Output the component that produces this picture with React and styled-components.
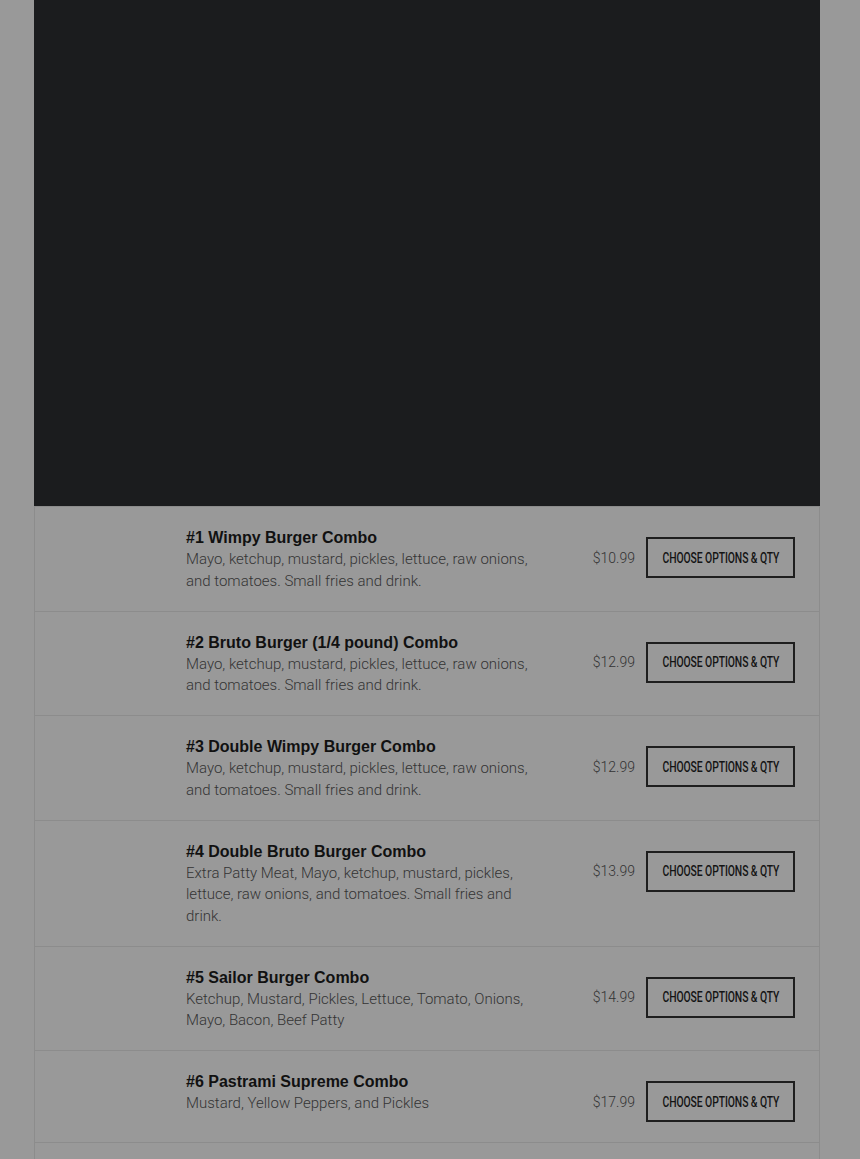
import React from "react";
import styled, { createGlobalStyle } from "styled-components";

const Global = createGlobalStyle`
  html, body { margin: 0; padding: 0; background: #999999; }
  body { font-family: Roboto, "Liberation Sans", sans-serif; }
`;

const Page = styled.div`
  padding-left: 34px;
  width: 786px;
`;

const Hero = styled.div`
  height: 506px;
  background: #1b1c1e;
`;

const List = styled.div`
  border-left: 1px solid #8c8c8c;
  border-right: 1px solid #8c8c8c;
  border-top: 1px solid #8c8c8c;
`;

const Row = styled.div`
  display: grid;
  grid-template-columns: 151px 362px 1fr 149px;
  align-items: start;
  padding: 20px 24px 18.5px 0;
  border-bottom: 1px solid #8c8c8c;
`;

const Thumb = styled.div`
  height: 52.5px;
`;

const Info = styled.div`
  display: flex;
  flex-direction: column;
`;

const Title = styled.div`
  font-family: "Liberation Sans", Arial, sans-serif;
  font-weight: 700;
  font-size: 16px;
  line-height: 22px;
  color: #111111;
`;

const Desc = styled.div`
  font-family: Roboto, sans-serif;
  font-weight: 300;
  font-size: 15px;
  line-height: 21.5px;
  color: #343434;
`;

const Price = styled.div`
  margin-top: 10px;
  height: 41px;
  display: flex;
  align-items: center;
  justify-content: flex-end;
  padding-right: 11px;
  font-family: Roboto, sans-serif;
  font-weight: 300;
  font-size: 14px;
  color: #333333;
`;

const Button = styled.button`
  margin-top: 10px;
  height: 41px;
  width: 149px;
  box-sizing: border-box;
  border: 2px solid #1e1e1e;
  background: transparent;
  display: flex;
  align-items: center;
  justify-content: center;
  padding: 0;
  cursor: pointer;
`;

const ButtonLabel = styled.span`
  display: inline-block;
  font-family: Roboto, sans-serif;
  font-weight: 500;
  font-size: 14px;
  color: #141414;
  white-space: nowrap;
  transform: scaleX(0.74);
  letter-spacing: -0.1px;
`;

const items = [
  {
    title: "#1 Wimpy Burger Combo",
    desc: "Mayo, ketchup, mustard, pickles, lettuce, raw onions, and tomatoes. Small fries and drink.",
    price: "$10.99",
  },
  {
    title: "#2 Bruto Burger (1/4 pound) Combo",
    desc: "Mayo, ketchup, mustard, pickles, lettuce, raw onions, and tomatoes. Small fries and drink.",
    price: "$12.99",
  },
  {
    title: "#3 Double Wimpy Burger Combo",
    desc: "Mayo, ketchup, mustard, pickles, lettuce, raw onions, and tomatoes. Small fries and drink.",
    price: "$12.99",
  },
  {
    title: "#4 Double Bruto Burger Combo",
    desc: "Extra Patty Meat, Mayo, ketchup, mustard, pickles, lettuce, raw onions, and tomatoes. Small fries and drink.",
    price: "$13.99",
  },
  {
    title: "#5 Sailor Burger Combo",
    desc: "Ketchup, Mustard, Pickles, Lettuce, Tomato, Onions, Mayo, Bacon, Beef Patty",
    price: "$14.99",
  },
  {
    title: "#6 Pastrami Supreme Combo",
    desc: "Mustard, Yellow Peppers, and Pickles",
    price: "$17.99",
  },
  {
    title: "#7 Pastrami Burger Combo",
    desc: "Mustard, Yellow Peppers, and Pickles",
    price: "$15.99",
  },
];

export default function App() {
  return (
    <>
      <Global />
      <Page>
        <Hero />
        <List>
          {items.map((it) => (
            <Row key={it.title}>
              <Thumb />
              <Info>
                <Title>{it.title}</Title>
                <Desc>{it.desc}</Desc>
              </Info>
              <Price>{it.price}</Price>
              <Button>
                <ButtonLabel>CHOOSE OPTIONS &amp; QTY</ButtonLabel>
              </Button>
            </Row>
          ))}
        </List>
      </Page>
    </>
  );
}
